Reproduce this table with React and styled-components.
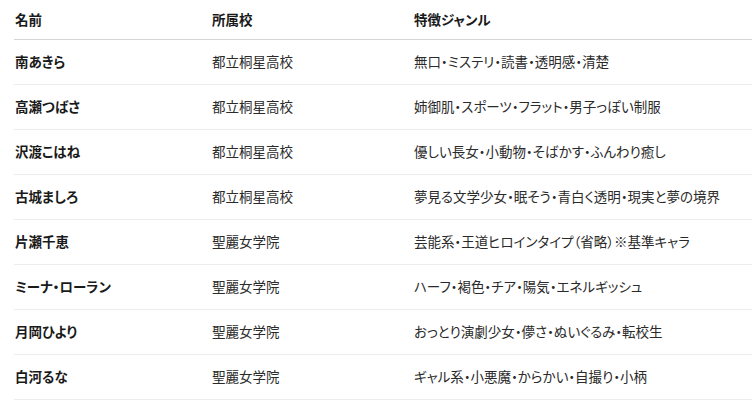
import React from "react";
import styled, { createGlobalStyle } from "styled-components";

const Global = createGlobalStyle`
  html, body { margin: 0; padding: 0; background: #fff; }
  body {
    font-family: "Noto Sans CJK JP", "Noto Sans", sans-serif;
    color: #222;
  }
`;

const Table = styled.div`
  margin-left: 14px;
  display: flex;
  flex-direction: column;
`;

const Row = styled.div`
  display: grid;
  grid-template-columns: 197px 202px 1fr;
  align-items: center;
  height: ${(p) => (p.$head ? "39px" : "44px")};
  border-bottom: 1px solid ${(p) => (p.$head ? "#d6d6d6" : "#ececec")};
`;

const Cell = styled.div`
  padding-left: 1px;
  font-size: 13.5px;
  line-height: 1;
  font-weight: ${(p) => (p.$bold ? 700 : 400)};
  color: ${(p) => (p.$bold ? "#1a1a1a" : "#2a2a2a")};
  font-feature-settings: "palt";
  white-space: nowrap;
`;

const rows = [
  ["南あきら", "都立桐星高校", "無口・ミステリ・読書・透明感・清楚"],
  ["高瀬つばさ", "都立桐星高校", "姉御肌・スポーツ・フラット・男子っぽい制服"],
  ["沢渡こはね", "都立桐星高校", "優しい長女・小動物・そばかす・ふんわり癒し"],
  ["古城ましろ", "都立桐星高校", "夢見る文学少女・眠そう・青白く透明・現実と夢の境界"],
  ["片瀬千恵", "聖麗女学院", "芸能系・王道ヒロインタイプ（省略）※基準キャラ"],
  ["ミーナ・ローラン", "聖麗女学院", "ハーフ・褐色・チア・陽気・エネルギッシュ"],
  ["月岡ひより", "聖麗女学院", "おっとり演劇少女・儚さ・ぬいぐるみ・転校生"],
  ["白河るな", "聖麗女学院", "ギャル系・小悪魔・からかい・自撮り・小柄"],
];

export default function App() {
  return (
    <>
      <Global />
      <Table>
        <Row $head>
          <Cell $bold>名前</Cell>
          <Cell $bold>所属校</Cell>
          <Cell $bold>特徴ジャンル</Cell>
        </Row>
        {rows.map((r) => (
          <Row key={r[0]}>
            <Cell $bold>{r[0]}</Cell>
            <Cell>{r[1]}</Cell>
            <Cell>{r[2]}</Cell>
          </Row>
        ))}
      </Table>
    </>
  );
}
